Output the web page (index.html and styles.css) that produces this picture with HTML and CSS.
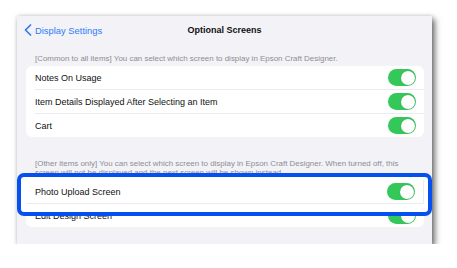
FILE: index.html
```html
<!DOCTYPE html>
<html lang="en">
<head>
  <meta charset="UTF-8">
  <meta name="viewport" content="width=device-width, initial-scale=1.0">
  <title>Optional Screens</title>
  <link rel="stylesheet" href="styles.css">
</head>
<body>
  <div class="screen">
    <div class="nav-bar">
      <a class="back" href="#">
        <svg class="chevron" width="8" height="12" viewBox="0 0 8 12">
          <path d="M6.5 1 L1.5 6 L6.5 11" fill="none" stroke="#2f7cf6" stroke-width="1.7" stroke-linecap="round" stroke-linejoin="round"/>
        </svg>
        <span>Display Settings</span>
      </a>
      <h2 class="nav-title">Optional Screens</h2>
    </div>

    <p class="section-note one-line">[Common to all items] You can select which screen to display in Epson Craft Designer.</p>
    <div class="group">
      <div class="row"><span>Notes On Usage</span><span class="toggle"></span></div>
      <div class="row"><span>Item Details Displayed After Selecting an Item</span><span class="toggle"></span></div>
      <div class="row"><span>Cart</span><span class="toggle"></span></div>
    </div>

    <p class="section-note">[Other items only] You can select which screen to display in Epson Craft Designer. When turned off, this<br>screen will not be displayed and the next screen will be shown instead.</p>
    <div class="group">
      <div class="row"><span>Photo Upload Screen</span><span class="toggle"></span></div>
      <div class="row"><span>Edit Design Screen</span><span class="toggle"></span></div>
    </div>

    <div class="highlight">
      <div class="row row-focus"><span>Photo Upload Screen</span><span class="toggle"></span></div>
    </div>
  </div>
</body>
</html>
```

FILE: styles.css
```css
body {
  margin: 0;
  background: white;
  font-family: "Liberation Sans", Arial, sans-serif;
}

.screen {
  position: relative;
  margin: 16px 0 0 17px;
  width: 415px;
  height: 228px;
  background: #f2f2f7;
  box-shadow: 3px 3px 6px rgba(0, 0, 0, 0.55), 0 0 4px rgba(0, 0, 0, 0.15);
}

.nav-bar {
  position: relative;
  height: 28px;
  display: flex;
  align-items: center;
  justify-content: center;
}

.back {
  position: absolute;
  left: 7px;
  top: 8px;
  display: flex;
  align-items: center;
  gap: 3px;
  color: #2f7cf6;
  text-decoration: none;
  font-size: 9.4px;
}

.nav-title {
  margin: 0;
  font-size: 9px;
  font-weight: bold;
  color: #111;
}

.section-note {
  margin: 22px 0 0;
  padding: 0 10px 0 18px;
  height: 21px;
  font-size: 7.95px;
  line-height: 9px;
  color: #8e8e93;
  white-space: nowrap;
  overflow: hidden;
}

.one-line {
  margin-top: 10px;
  height: 12px;
}

.group {
  margin: 0 8px 0 9px;
  background: white;
  border-radius: 6px;
  overflow: hidden;
}

.row {
  height: 23px;
  margin-left: 9px;
  padding-right: 8px;
  display: flex;
  align-items: center;
  justify-content: space-between;
  font-size: 9px;
  color: #111;
  border-bottom: 1px solid #ececf0;
}

.row:last-child {
  border-bottom: none;
}

.toggle {
  position: relative;
  width: 28px;
  height: 17px;
  border-radius: 9px;
  background: #34c759;
}

.toggle::after {
  content: "";
  position: absolute;
  right: 1.5px;
  top: 1.5px;
  width: 14px;
  height: 14px;
  border-radius: 50%;
  background: white;
  box-shadow: 0 0 1px rgba(0, 0, 0, 0.3);
}

.highlight {
  position: absolute;
  left: 0;
  top: 157px;
  width: 398px;
  height: 31px;
  padding: 3px 4px 1px 5px;
  border: 4px solid #0650ef;
  border-radius: 7px;
  background: white;
}

.row-focus {
  margin-left: 0;
  padding-left: 9px;
  background: white;
  border-right: 1px solid #ececf0;
  border-bottom: 1px solid #ececf0;
}

.row-focus:last-child {
  border-bottom: 1px solid #ececf0;
}
```
